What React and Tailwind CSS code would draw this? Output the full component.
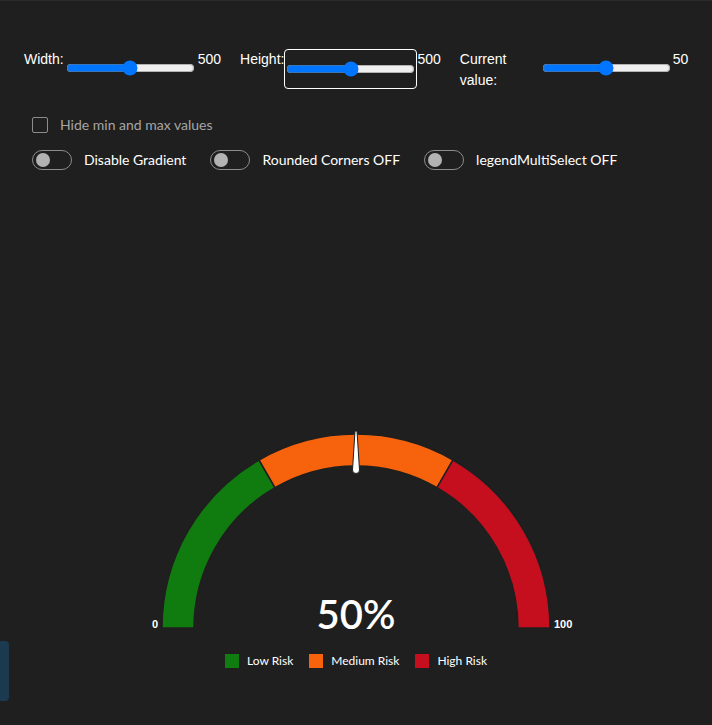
import React, { useState } from 'react';

const FONT = { fontFamily: 'Lato, "Liberation Sans", sans-serif' };
const ARIAL = { fontFamily: '"Liberation Sans", Arial, sans-serif' };

const polar = (cx, cy, r, deg) => {
  const a = (deg * Math.PI) / 180;
  return [cx + r * Math.cos(a), cy - r * Math.sin(a)];
};

const arcPath = (cx, cy, r1, r2, from, to) => {
  const [x1, y1] = polar(cx, cy, r2, from);
  const [x2, y2] = polar(cx, cy, r2, to);
  const [x3, y3] = polar(cx, cy, r1, to);
  const [x4, y4] = polar(cx, cy, r1, from);
  return `M ${x1} ${y1} A ${r2} ${r2} 0 0 1 ${x2} ${y2} L ${x3} ${y3} A ${r1} ${r1} 0 0 0 ${x4} ${y4} Z`;
};

const segments = [
  { name: 'Low Risk', color: '#107c10', from: 180, to: 120 },
  { name: 'Medium Risk', color: '#f7630c', from: 120, to: 60 },
  { name: 'High Risk', color: '#c50f1f', from: 60, to: 0 },
];

const Toggle = ({ label }) => (
  <div className="flex items-center h-[21px]">
    <div className="w-10 h-5 rounded-full border border-[#8c8c8c] flex items-center">
      <div className="w-[14px] h-[14px] rounded-full bg-[#b3b3b3] ml-[3px]"></div>
    </div>
    <span className="ml-3 text-sm text-white leading-[21px]">{label}</span>
  </div>
);

const Gauge = ({ value }) => {
  const cx = 250;
  const cy = 448;
  return (
    <svg width="500" height="460" viewBox="0 0 500 460" className="block mx-auto">
      {segments.map((s) => (
        <path
          key={s.name}
          d={arcPath(cx, cy, 162, 194, s.from, s.to)}
          fill={s.color}
          stroke="#1f1f1f"
          strokeWidth="1.5"
        />
      ))}
      <path
        d="M 249 251 L 251 251 L 253.5 290 A 3.5 3.5 0 0 1 246.5 290 Z"
        fill="#ffffff"
        stroke="#1f1f1f"
        strokeWidth="1"
      />
      <text x="52" y="448" textAnchor="end" fill="#ffffff" fontSize="11" fontWeight="700" style={ARIAL}>
        0
      </text>
      <text x="448" y="448" fill="#ffffff" fontSize="11" fontWeight="700" style={ARIAL}>
        100
      </text>
      <text x="250" y="449" textAnchor="middle" fill="#ffffff" fontSize="40" fontWeight="600" style={FONT}>
        {value}%
      </text>
    </svg>
  );
};

const App = () => {
  const [width, setWidth] = useState(500);
  const [height, setHeight] = useState(500);
  const [current, setCurrent] = useState(50);

  return (
    <div className="relative min-h-[725px] bg-[#1f1f1f] border-t border-[#2a2a2a] text-white text-sm" style={FONT}>
      <div className="flex items-start pl-6 pt-12 leading-[21px]" style={ARIAL}>
        <label>Width:</label>
        <input
          type="range"
          min="0"
          max="1000"
          value={width}
          onChange={(e) => setWidth(Number(e.target.value))}
          className="w-[129px] mt-[11px] ml-[2px]"
        />
        <span className="ml-[3px]">{width}</span>

        <label className="ml-[19px]">Height:</label>
        <div className="w-[133px] h-10 border border-white rounded-[4px] flex items-center justify-center">
          <input
            type="range"
            min="0"
            max="1000"
            value={height}
            onChange={(e) => setHeight(Number(e.target.value))}
            className="w-[129px]"
          />
        </div>
        <span>{height}</span>

        <label className="ml-[19px] w-[82px]">Current value:</label>
        <input
          type="range"
          min="0"
          max="100"
          value={current}
          onChange={(e) => setCurrent(Number(e.target.value))}
          className="w-[129px] mt-[11px]"
        />
        <span className="ml-[2px]">{current}</span>
      </div>

      <div className="flex items-center h-[21px] pl-8 mt-[23px]">
        <div className="w-4 h-4 border border-[#8c8c8c] rounded-[2px]"></div>
        <span className="ml-3 text-[#a6a6a6]">Hide min and max values</span>
      </div>

      <div className="flex items-center gap-6 pl-8 mt-[14px]">
        <Toggle label="Disable Gradient" />
        <Toggle label="Rounded Corners OFF" />
        <Toggle label="legendMultiSelect OFF" />
      </div>

      <div className="mt-[10px]">
        <Gauge value={current} />
        <div className="flex justify-center items-center gap-4 mt-[13px] h-4 text-xs">
          {segments.map((s) => (
            <div key={s.name} className="flex items-center gap-2">
              <span className="w-[14px] h-[14px]" style={{ backgroundColor: s.color }}></span>
              <span>{s.name}</span>
            </div>
          ))}
        </div>
      </div>

      <div className="absolute left-0 top-[640px] w-[9px] h-[60px] bg-[#1b3a50] rounded-r-[4px]"></div>
    </div>
  );
};

export default App;
